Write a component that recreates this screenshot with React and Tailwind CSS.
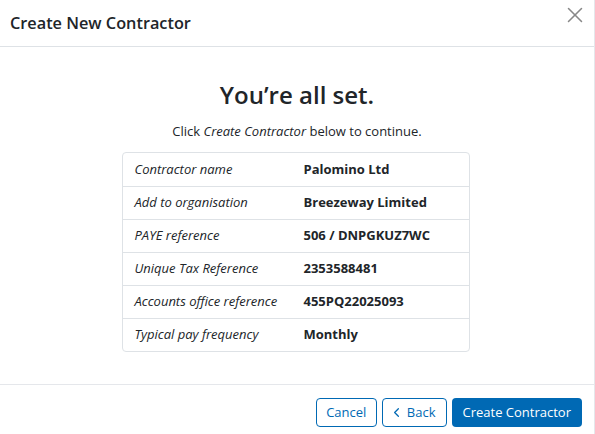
import { X, ChevronLeft } from "lucide-react";

// Summary rows shown before creating the contractor
const rows = [
  ["Contractor name", "Palomino Ltd"],
  ["Add to organisation", "Breezeway Limited"],
  ["PAYE reference", "506 / DNPGKUZ7WC"],
  ["Unique Tax Reference", "2353588481"],
  ["Accounts office reference", "455PQ22025093"],
  ["Typical pay frequency", "Monthly"],
];

const App = () => {
  return (
    <div
      className="w-[595px] h-[434px] bg-white text-[#212529] border-r border-[#e5e7eb] flex flex-col"
      style={{ fontFamily: '"Open Sans", sans-serif' }}
    >
      {/* Header */}
      <div className="h-[47px] border-b border-[#dee2e6] flex items-center justify-between pl-[10px] pr-[6px] shrink-0">
        <h2 className="text-[16.3px] font-semibold">Create New Contractor</h2>
        <button className="text-[#888] -mt-[16px]">
          <X size={26} strokeWidth={1.4} />
        </button>
      </div>

      {/* Body */}
      <div className="flex-1 flex flex-col items-center pt-[30px]">
        <h1 className="text-[24px] font-semibold leading-[36px]">You’re all set.</h1>
        <p className="text-[13px] mt-[8px] leading-[20px]">
          Click <em>Create Contractor</em> below to continue.
        </p>
        <div className="mt-[11px] w-[348px] border border-[#dee2e6] rounded-[4px] mr-[3px]">
          {rows.map(([label, value], i) => (
            <div
              key={i}
              className={`flex items-center h-[33px] text-[13px] ${
                i > 0 ? "border-t border-[#dee2e6]" : ""
              }`}
            >
              <div className="w-[181px] pl-[12px] italic">{label}</div>
              <div className="font-bold">{value}</div>
            </div>
          ))}
        </div>
      </div>

      {/* Footer */}
      <div className="h-[49px] border-t border-[#e5e7eb] flex items-start justify-end gap-[5px] pt-[13px] pr-[12px] shrink-0 mb-[1px]">
        <button className="h-[29px] px-[9.5px] border border-[#0069b4] text-[#0069b4] rounded-[4px] text-[13px]">
          Cancel
        </button>
        <button className="h-[29px] pl-[6px] pr-[10px] border border-[#0069b4] text-[#0069b4] rounded-[4px] text-[13px] flex items-center gap-[3px]">
          <ChevronLeft size={15} strokeWidth={2} />
          Back
        </button>
        <button className="h-[29px] px-[11px] bg-[#0069b4] text-white rounded-[4px] text-[13px]">
          Create Contractor
        </button>
      </div>
    </div>
  );
};

export default App;
